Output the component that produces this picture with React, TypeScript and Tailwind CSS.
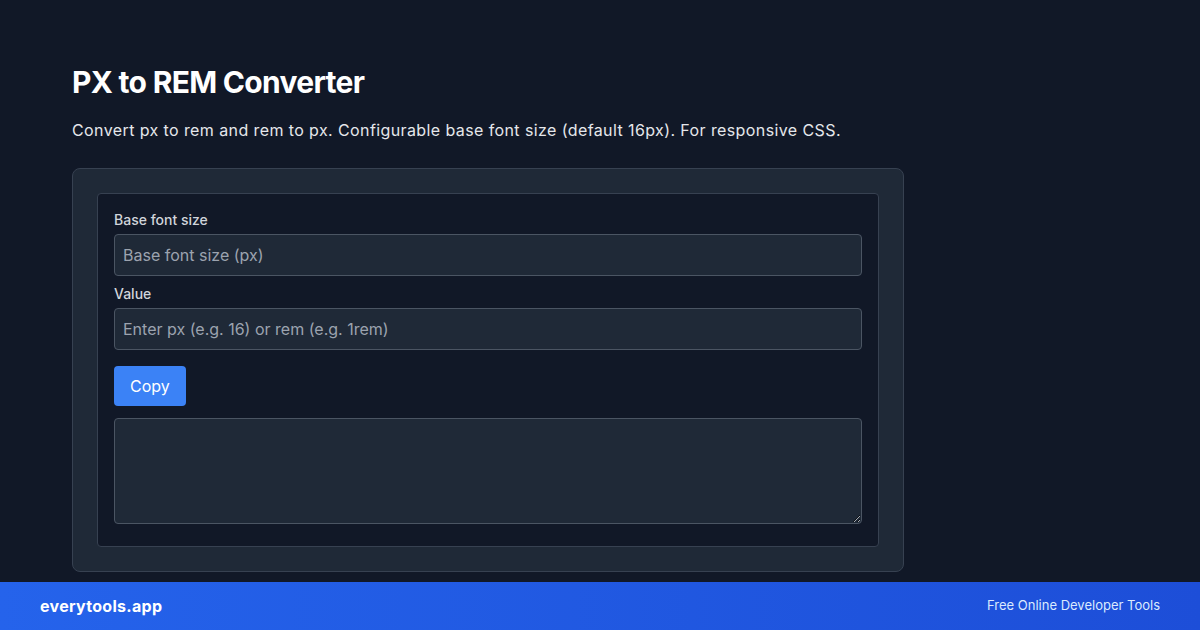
export default function App() {
  return (
    <div
      className="h-[630px] w-[1200px] flex flex-col bg-[#111827] overflow-hidden"
      style={{ fontFamily: 'Inter, "Noto Sans", sans-serif' }}
    >
      <main className="flex-1 px-[72px] pt-16">
        <div className="w-[832px]">
          <h1 className="text-3xl font-bold tracking-[-0.7px] text-white">PX to REM Converter</h1>
          <p className="mt-[18px] text-base tracking-[0.4px] text-[#e5e7eb]">
            Convert px to rem and rem to px. Configurable base font size (default 16px). For responsive CSS.
          </p>

          <div className="mt-[26px] rounded-lg border border-[#374151] bg-[#1f2937] p-6">
            <div className="rounded border border-[#374151] bg-[#111827] p-4">
              <label className="block text-sm font-medium text-[#d1d5db] mb-1">Base font size</label>
              <input
                className="block w-full rounded border border-[#4b5563] bg-[#1f2937] px-2 py-2 text-base text-white placeholder:text-[#9ca3af] focus:outline-none"
                placeholder="Base font size (px)"
              />

              <label className="mt-2 block text-sm font-medium text-[#d1d5db] mb-1">Value</label>
              <input
                className="block w-full rounded border border-[#4b5563] bg-[#1f2937] px-2 py-2 text-base text-white placeholder:text-[#9ca3af] focus:outline-none"
                placeholder="Enter px (e.g. 16) or rem (e.g. 1rem)"
              />

              <button className="mt-4 rounded bg-[#3b82f6] px-4 py-2 text-base text-white">Copy</button>

              <div className="mt-3">
                <textarea
                  readOnly
                  className="w-full h-[106px] rounded border border-[#4b5563] bg-[#1f2937] px-2 py-2 text-sm text-white focus:outline-none"
                />
              </div>
            </div>
          </div>
        </div>
      </main>

      <footer className="h-12 shrink-0 flex items-center justify-between px-10 bg-gradient-to-r from-[#2563eb] to-[#1d4ed8]">
        <span className="text-base font-bold tracking-[0.3px] text-white">everytools.app</span>
        <span className="text-[13px] text-[#dbeafe]">Free Online Developer Tools</span>
      </footer>
    </div>
  );
}
